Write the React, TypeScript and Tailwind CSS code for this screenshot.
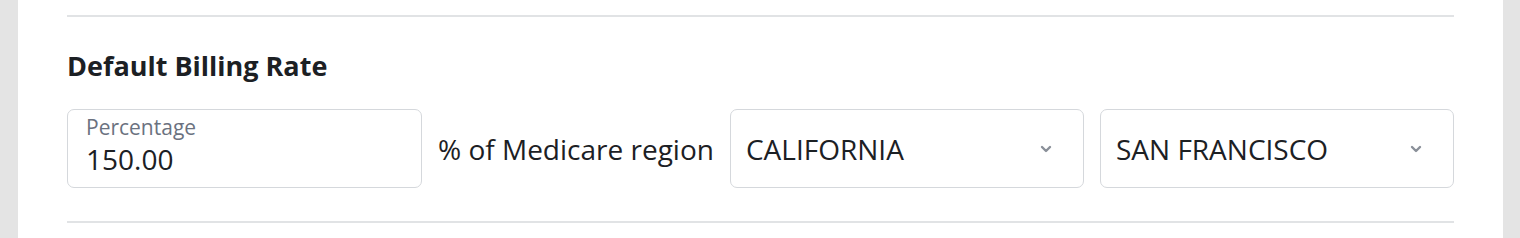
function Chevron() {
  return (
    <svg width="12" height="8" viewBox="0 0 12 8" fill="none" className="text-[#8a9099]">
      <path d="M2 2l4 4 4-4" stroke="currentColor" strokeWidth="2.4" strokeLinecap="round" strokeLinejoin="round" />
    </svg>
  )
}

function SelectBox({ value }: { value: string }) {
  return (
    <div className="flex-1 h-[79px] flex items-center justify-between pl-[15px] pr-[31px] border border-[#d5d8dc] rounded-[7px] bg-white">
      <span className="text-[28px] text-[#1c2024]">{value}</span>
      <Chevron />
    </div>
  )
}

export default function App() {
  return (
    <div className="w-[1520px] h-[238px] flex bg-[#e4e4e4] overflow-hidden" style={{ fontFamily: '"Open Sans", sans-serif' }}>
      <div className="ml-[18px] w-[1485px] bg-white px-[49px]">
        <div className="border-t-2 border-[#e1e3e5] mt-[15px]" />
        <h2 className="mt-[33px] text-[27px] font-bold text-[#1c2024] leading-[32px]">Default Billing Rate</h2>
        <div className="mt-[27px] flex items-center gap-[16px]">
          <div className="w-[355px] h-[79px] flex flex-col pt-[6px] pl-[18px] border border-[#d5d8dc] rounded-[7px]">
            <span className="text-[21px] text-[#6b7280] leading-[22px]">Percentage</span>
            <span className="mt-[6px] text-[28px] text-[#1c2024] leading-[30px]">150.00</span>
          </div>
          <span className="text-[28px] text-[#1c2024] whitespace-nowrap">% of Medicare region</span>
          <SelectBox value="CALIFORNIA" />
          <SelectBox value="SAN FRANCISCO" />
        </div>
        <div className="border-t-2 border-[#e1e3e5] mt-[33px]" />
      </div>
    </div>
  )
}
